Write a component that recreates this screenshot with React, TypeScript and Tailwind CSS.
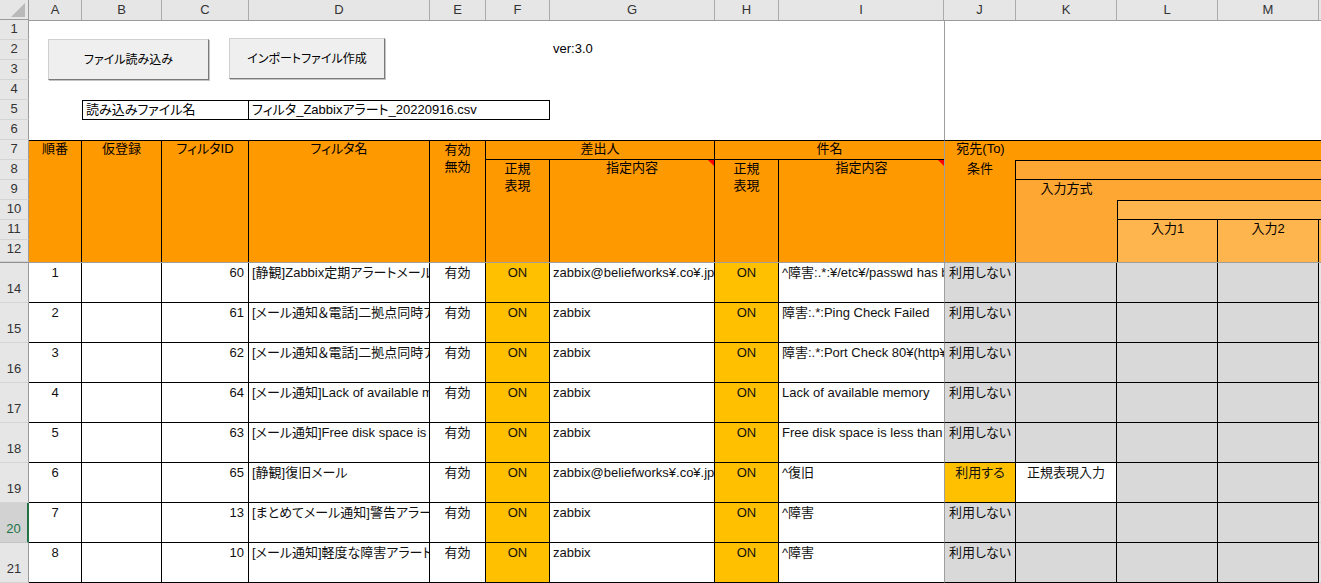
import React from "react";

const SG =
  "grid grid-cols-[53px_80px_87px_181px_56px_64px_165px_64px_165px_72px_101px_101px_101px_1fr]";
const FONT =
  "font-['Liberation_Sans','Noto_Sans_CJK_JP',sans-serif] [font-feature-settings:'palt']";

type Row = {
  n: number;
  id: number;
  name: string;
  from: string;
  subj: string;
  use?: boolean;
};

const rows: Row[] = [
  { n: 1, id: 60, name: "[静観]Zabbix定期アラートメール", from: "zabbix@beliefworks¥.co¥.jp", subj: "^障害:.*:¥/etc¥/passwd has been changed" },
  { n: 2, id: 61, name: "[メール通知＆電話]二拠点同時アラート", from: "zabbix", subj: "障害:.*:Ping Check Failed" },
  { n: 3, id: 62, name: "[メール通知＆電話]二拠点同時アラート", from: "zabbix", subj: "障害:.*:Port Check 80¥(http¥) Failed" },
  { n: 4, id: 64, name: "[メール通知]Lack of available memory", from: "zabbix", subj: "Lack of available memory" },
  { n: 5, id: 63, name: "[メール通知]Free disk space is less than 20%", from: "zabbix", subj: "Free disk space is less than 20%" },
  { n: 6, id: 65, name: "[静観]復旧メール", from: "zabbix@beliefworks¥.co¥.jp", subj: "^復旧", use: true },
  { n: 7, id: 13, name: "[まとめてメール通知]警告アラート", from: "zabbix", subj: "^障害" },
  { n: 8, id: 10, name: "[メール通知]軽度な障害アラート", from: "zabbix", subj: "^障害" },
];

const letters = ["A", "B", "C", "D", "E", "F", "G", "H", "I", "J", "K", "L", "M"];

const rowHeads: { label: string; cls: string }[] = [
  { label: "1", cls: "h-[20px] items-start" },
  { label: "2", cls: "h-[20px] items-start" },
  { label: "3", cls: "h-[20px] items-start" },
  { label: "4", cls: "h-[20px] items-start" },
  { label: "5", cls: "h-[20px] items-start" },
  { label: "6", cls: "h-[20px] items-start" },
  { label: "7", cls: "h-[20px] items-start" },
  { label: "8", cls: "h-[20px] items-start" },
  { label: "9", cls: "h-[20px] items-start" },
  { label: "10", cls: "h-[20px] items-start" },
  { label: "11", cls: "h-[20px] items-start" },
  { label: "12", cls: "h-[22px] items-start" },
];

const dataHeads = ["14", "15", "16", "17", "18", "19", "20", "21"];

function Tri() {
  return (
    <span className="absolute top-0 right-0 w-0 h-0 border-l-[6px] border-l-transparent border-t-[6px] border-t-[#ff0000]" />
  );
}

function DataRow({ r }: { r: Row }) {
  const cell =
    "border-r border-b border-black pt-[2px] overflow-hidden whitespace-nowrap";
  return (
    <div className={`${SG} h-[40px] text-[13px] leading-[16px] text-[#111]`}>
      <div className={`${cell} bg-white text-center`}>{r.n}</div>
      <div className={`${cell} bg-white`} />
      <div className={`${cell} bg-white text-right pr-[4px]`}>{r.id}</div>
      <div className={`${cell} bg-white pl-[3px]`}>{r.name}</div>
      <div className={`${cell} bg-white text-center`}>有効</div>
      <div className={`${cell} bg-[#ffc000] text-center`}>ON</div>
      <div className={`${cell} bg-white pl-[3px]`}>{r.from}</div>
      <div className={`${cell} bg-[#ffc000] text-center`}>ON</div>
      <div className="border-b border-black pt-[2px] overflow-hidden whitespace-nowrap bg-white pl-[3px]">
        {r.subj}
      </div>
      <div
        className={`${cell} border-l border-l-[#9e9e9e] text-center ${
          r.use ? "bg-[#ffc000]" : "bg-[#d9d9d9]"
        }`}
      >
        {r.use ? "利用する" : "利用しない"}
      </div>
      <div className={`${cell} text-center ${r.use ? "bg-white" : "bg-[#d9d9d9]"}`}>
        {r.use ? "正規表現入力" : ""}
      </div>
      <div className={`${cell} bg-[#d9d9d9]`} />
      <div className={`${cell} bg-[#d9d9d9]`} />
      <div className="bg-[#e4e4e4] border-b border-[#cfcfcf]" />
    </div>
  );
}

export default function App() {
  const O = "bg-[#ff9900]";
  return (
    <div className={`w-[1321px] h-[583px] overflow-hidden bg-white flex ${FONT}`}>
      {/* Row header column */}
      <div className="w-[29px] flex flex-col shrink-0 font-['Liberation_Sans',sans-serif] text-[13px] leading-[18px] text-[#333]">
        <div className="h-[20px] bg-[#e6e6e6] border-r border-b border-[#9b9b9b] relative">
          <svg width="28" height="19" className="absolute left-0 top-0">
            <polygon points="25,3 25,17 11,17" fill="#b9b9b9" />
          </svg>
        </div>
        {rowHeads.map((h) => (
          <div
            key={h.label}
            className={`${h.cls} flex justify-center bg-[#e6e6e6] border-r border-r-[#9b9b9b] border-b border-b-[#d4d4d4]`}
          >
            {h.label}
          </div>
        ))}
        <div className="h-px bg-[#8f8f8f]" />
        {dataHeads.map((l) =>
          l === "20" ? (
            <div
              key={l}
              className="h-[40px] flex items-end justify-center pb-[4px] bg-[#d2d2d2] text-[#217346] border-r-2 border-r-[#217346] border-b border-b-[#c4c4c4]"
            >
              {l}
            </div>
          ) : (
            <div
              key={l}
              className="h-[40px] flex items-end justify-center pb-[4px] bg-[#e6e6e6] border-r border-r-[#9b9b9b] border-b border-b-[#d4d4d4]"
            >
              {l}
            </div>
          )
        )}
      </div>

      {/* Sheet */}
      <div className="flex-1 flex flex-col min-w-0">
        {/* Column header */}
        <div className={`${SG} h-[20px] bg-[#e6e6e6] font-['Liberation_Sans',sans-serif] text-[13px] text-[#333]`}>
          {letters.map((l) => (
            <div
              key={l}
              className="flex items-center justify-center border-r border-r-[#ababab] border-b border-b-[#9b9b9b]"
            >
              {l}
            </div>
          ))}
          <div className="border-b border-b-[#9b9b9b]" />
        </div>

        {/* Rows 1-6 */}
        <div className={`${SG} grid-rows-[repeat(6,20px)] h-[120px] text-[13px] text-black`}>
          <div className="col-start-1 col-span-5 row-start-1 row-span-4 flex items-start gap-[20px] pl-[19px] pt-[19px] text-[12px]">
            <div className="w-[161px] h-[41px] flex items-center justify-center bg-[#efefef] border border-[#d0d0d0] border-r-[#7a7a7a] border-b-[#7a7a7a] shadow-[1px_1px_0_#c4c4c4]">
              ファイル読み込み
            </div>
            <div className="w-[156px] h-[41px] -mt-px flex items-center justify-center bg-[#efefef] border border-[#d0d0d0] border-r-[#7a7a7a] border-b-[#7a7a7a] shadow-[1px_1px_0_#c4c4c4]">
              インポートファイル作成
            </div>
          </div>
          <div className="col-start-7 row-start-2 pl-[3px] leading-[18px]">ver:3.0</div>
          <div className="col-start-2 col-span-2 row-start-5 border border-black pl-[3px] leading-[18px] whitespace-nowrap">
            読み込みファイル名
          </div>
          <div className="col-start-4 col-span-3 row-start-5 border-y border-r border-black pl-[3px] leading-[18px] whitespace-nowrap">
            フィルタ_Zabbixアラート_20220916.csv
          </div>
          <div className="col-start-10 row-start-1 row-span-6 border-l border-l-[#9e9e9e]" />
        </div>

        {/* Header rows 7-12 */}
        <div className={`${SG} grid-rows-[20px_20px_20px_20px_20px_22px] h-[122px] text-[13px] leading-[16px] text-black`}>
          <div className={`col-start-1 row-start-1 row-span-6 ${O} border-t border-r border-black text-center`}>順番</div>
          <div className={`col-start-2 row-start-1 row-span-6 ${O} border-t border-r border-black text-center`}>仮登録</div>
          <div className={`col-start-3 row-start-1 row-span-6 ${O} border-t border-r border-black text-center`}>フィルタID</div>
          <div className={`col-start-4 row-start-1 row-span-6 ${O} border-t border-r border-black text-center`}>フィルタ名</div>
          <div className={`col-start-5 row-start-1 row-span-6 ${O} border-t border-r border-black text-center leading-[17px]`}>
            有効
            <br />
            無効
          </div>
          <div className={`col-start-6 col-span-2 row-start-1 ${O} border-t border-r border-b border-black text-center`}>差出人</div>
          <div className={`col-start-6 row-start-2 row-span-5 ${O} border-r border-black text-center leading-[17px]`}>
            正規
            <br />
            表現
          </div>
          <div className={`relative col-start-7 row-start-2 row-span-5 ${O} border-r border-black text-center`}>
            指定内容
            <Tri />
          </div>
          <div className={`col-start-8 col-span-2 row-start-1 ${O} border-t border-b border-black text-center`}>件名</div>
          <div className={`col-start-8 row-start-2 row-span-5 ${O} border-r border-black text-center leading-[17px]`}>
            正規
            <br />
            表現
          </div>
          <div className={`relative col-start-9 row-start-2 row-span-5 ${O} text-center`}>
            指定内容
            <Tri />
          </div>
          <div className={`col-start-10 row-start-1 ${O} border-t border-black border-l border-l-[#9e9e9e] text-center whitespace-nowrap`}>
            宛先(To)
          </div>
          <div className={`col-start-11 col-span-4 row-start-1 ${O} border-t border-black`} />
          <div className={`col-start-10 row-start-2 row-span-5 ${O} border-l border-l-[#9e9e9e] border-r border-r-black text-center pt-px`}>
            条件
          </div>
          <div className="col-start-11 col-span-4 row-start-2 bg-[#ffa733] border-t border-b border-black" />
          <div className="col-start-11 row-start-3 row-span-4 bg-[#ffa733] text-center pt-px">入力方式</div>
          <div className="col-start-12 col-span-3 row-start-3 bg-[#ffa733]" />
          <div className="col-start-12 col-span-3 row-start-4 bg-[#ffb54d] border-t border-l border-b border-black" />
          <div className="col-start-12 row-start-5 row-span-2 bg-[#ffb54d] border-l border-r border-black text-center pt-px">入力1</div>
          <div className="col-start-13 row-start-5 row-span-2 bg-[#ffb54d] border-r border-black text-center pt-px">入力2</div>
          <div className="col-start-14 row-start-5 row-span-2 bg-[#ffb54d]" />
        </div>

        {/* Freeze line */}
        <div className="h-px bg-[#9e9e9e]" />

        {/* Data rows */}
        {rows.map((r) => (
          <DataRow key={r.n} r={r} />
        ))}
      </div>
    </div>
  );
}
